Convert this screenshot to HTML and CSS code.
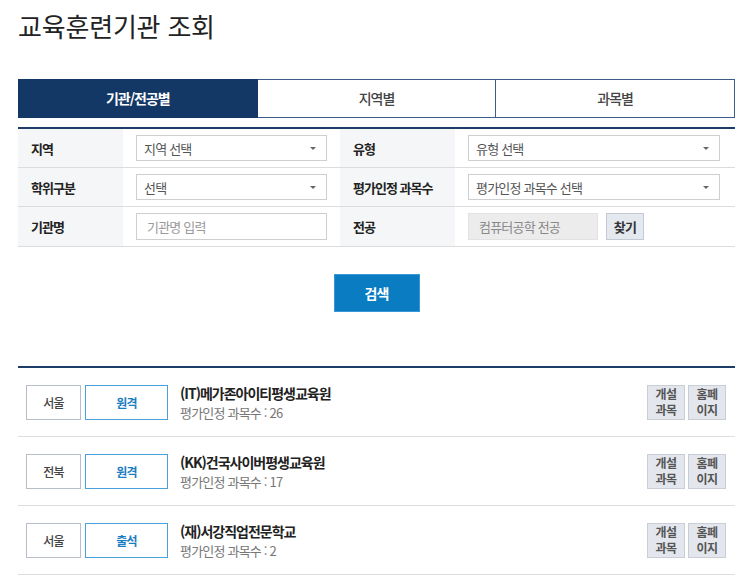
FILE: index.html
```html
<!DOCTYPE html>
<html lang="ko">
<head>
    <meta charset="UTF-8">
    <meta name="viewport" content="width=device-width, initial-scale=1.0">
    <title>교육훈련기관 조회</title>
    <link rel="stylesheet" href="styles.css">
</head>
<body>
    <div class="container">
        <h1>교육훈련기관 조회</h1>

        <div class="tabs">
            <div class="tab active">기관/전공별</div>
            <div class="tab">지역별</div>
            <div class="tab">과목별</div>
        </div>

        <div class="search-form">
            <div class="row">
                <div class="label">지역</div>
                <div class="field">
                    <div class="select"><span>지역 선택</span><span class="caret"></span></div>
                </div>
                <div class="label">유형</div>
                <div class="field">
                    <div class="select wide"><span>유형 선택</span><span class="caret"></span></div>
                </div>
            </div>
            <div class="row">
                <div class="label">학위구분</div>
                <div class="field">
                    <div class="select"><span>선택</span><span class="caret"></span></div>
                </div>
                <div class="label">평가인정 과목수</div>
                <div class="field">
                    <div class="select wide"><span>평가인정 과목수 선택</span><span class="caret"></span></div>
                </div>
            </div>
            <div class="row">
                <div class="label">기관명</div>
                <div class="field">
                    <div class="input placeholder">기관명 입력</div>
                </div>
                <div class="label">전공</div>
                <div class="field">
                    <div class="input readonly">컴퓨터공학 전공</div>
                    <button class="find-btn">찾기</button>
                </div>
            </div>
        </div>

        <div class="search-actions">
            <button class="search-btn">검색</button>
        </div>

        <ul class="result-list">
            <li class="result">
                <span class="badge">서울</span>
                <span class="badge type">원격</span>
                <div class="info">
                    <strong>(IT)메가존아이티평생교육원</strong>
                    <p>평가인정 과목수 : 26</p>
                </div>
                <div class="links">
                    <a href="#">개설<br>과목</a>
                    <a href="#">홈페<br>이지</a>
                </div>
            </li>
            <li class="result">
                <span class="badge">전북</span>
                <span class="badge type">원격</span>
                <div class="info">
                    <strong>(KK)건국사이버평생교육원</strong>
                    <p>평가인정 과목수 : 17</p>
                </div>
                <div class="links">
                    <a href="#">개설<br>과목</a>
                    <a href="#">홈페<br>이지</a>
                </div>
            </li>
            <li class="result">
                <span class="badge">서울</span>
                <span class="badge type">출석</span>
                <div class="info">
                    <strong>(재)서강직업전문학교</strong>
                    <p>평가인정 과목수 : 2</p>
                </div>
                <div class="links">
                    <a href="#">개설<br>과목</a>
                    <a href="#">홈페<br>이지</a>
                </div>
            </li>
        </ul>
    </div>
</body>
</html>
```

FILE: styles.css
```css
body {
    margin: 0;
    padding: 0;
    background-color: #fff;
    font-family: "Noto Sans CJK KR", "Noto Sans", sans-serif;
    color: #333;
}
.container {
    width: 717px;
    margin-left: 18px;
}
h1 {
    margin: 0;
    padding-top: 6px;
    font-size: 26px;
    font-weight: 400;
    line-height: 40px;
    letter-spacing: -0.2px;
    color: #222;
}

/* tabs */
.tabs {
    display: flex;
    margin-top: 33px;
}
.tab {
    flex: 1;
    height: 37px;
    line-height: 37px;
    text-align: center;
    font-size: 14px;
    font-weight: 500;
    letter-spacing: -1px;
    color: #444;
    border: 1px solid #3d5c88;
    border-left: 0;
}
.tab:first-child {
    border-left: 1px solid #3d5c88;
}
.tab.active {
    background-color: #133865;
    border-color: #133865;
    color: #fff;
    font-weight: 700;
}

/* form */
.search-form {
    margin-top: 9px;
    border-top: 2px solid #1d3d69;
}
.row {
    display: grid;
    grid-template-columns: 105px 217px 115px 1fr;
    border-bottom: 1px solid #dcdcdc;
    height: 38px;
}
.row:last-child {
    height: 39px;
}
.label {
    display: flex;
    align-items: center;
    padding-left: 13px;
    background-color: #f5f6f7;
    font-size: 13px;
    font-weight: 700;
    letter-spacing: -1px;
    color: #222;
}
.field {
    display: flex;
    align-items: center;
    gap: 8px;
    padding-left: 13px;
}
.select,
.input {
    box-sizing: border-box;
    width: 191px;
    height: 26px;
    padding: 0 10px 0 7px;
    border: 1px solid #cfcfcf;
    font-size: 13px;
    letter-spacing: -0.8px;
    color: #555;
    display: flex;
    align-items: center;
    justify-content: space-between;
}
.select.wide {
    width: 252px;
}
.caret {
    width: 0;
    height: 0;
    border-left: 3px solid transparent;
    border-right: 3px solid transparent;
    border-top: 3px solid #666;
}
.input {
    height: 27px;
    padding-left: 10px;
}
.input.placeholder {
    color: #999;
}
.input.readonly {
    width: 130px;
    background-color: #ececec;
    border-color: #e2e2e2;
    color: #888;
}
.find-btn {
    height: 27px;
    width: 38px;
    padding: 0;
    border: 1px solid #c3cad5;
    background-color: #e4e8ef;
    font-family: inherit;
    font-size: 13px;
    font-weight: 700;
    letter-spacing: -0.8px;
    color: #333;
}

/* search button */
.search-actions {
    text-align: center;
    padding: 27px 0 54px;
}
.search-btn {
    width: 86px;
    height: 38px;
    border: 1px solid #3a97d6;
    background-color: #0a7cc2;
    color: #fff;
    font-family: inherit;
    font-size: 14px;
    font-weight: 700;
    letter-spacing: -1px;
}

/* results */
.result-list {
    list-style: none;
    margin: 0;
    padding: 0;
    border-top: 2px solid #1d3d69;
}
.result {
    display: flex;
    align-items: center;
    height: 68px;
    padding: 0 9px 0 8px;
    border-bottom: 1px solid #dedede;
}
.badge {
    box-sizing: border-box;
    width: 55px;
    height: 35px;
    margin-right: 4px;
    display: flex;
    align-items: center;
    justify-content: center;
    border: 1px solid #b8bec7;
    font-size: 12px;
    font-weight: 500;
    letter-spacing: -0.8px;
    color: #444;
}
.badge.type {
    width: 83px;
    border-color: #4aa0da;
    color: #1b7dc2;
    font-weight: 700;
}
.info {
    margin-left: 8px;
}
.info strong {
    display: block;
    font-size: 14px;
    line-height: 20px;
    letter-spacing: -1px;
    color: #222;
}
.info p {
    margin: 0;
    font-size: 13px;
    line-height: 19px;
    letter-spacing: -0.8px;
    color: #777;
}
.links {
    margin-left: auto;
    display: flex;
    gap: 3px;
}
.links a {
    box-sizing: border-box;
    width: 38px;
    height: 35px;
    display: flex;
    align-items: center;
    justify-content: center;
    text-align: center;
    background-color: #e3e7ed;
    border: 1px solid #c9ced6;
    font-size: 12px;
    font-weight: 700;
    line-height: 16px;
    letter-spacing: -0.5px;
    color: #555;
    text-decoration: none;
}
```
